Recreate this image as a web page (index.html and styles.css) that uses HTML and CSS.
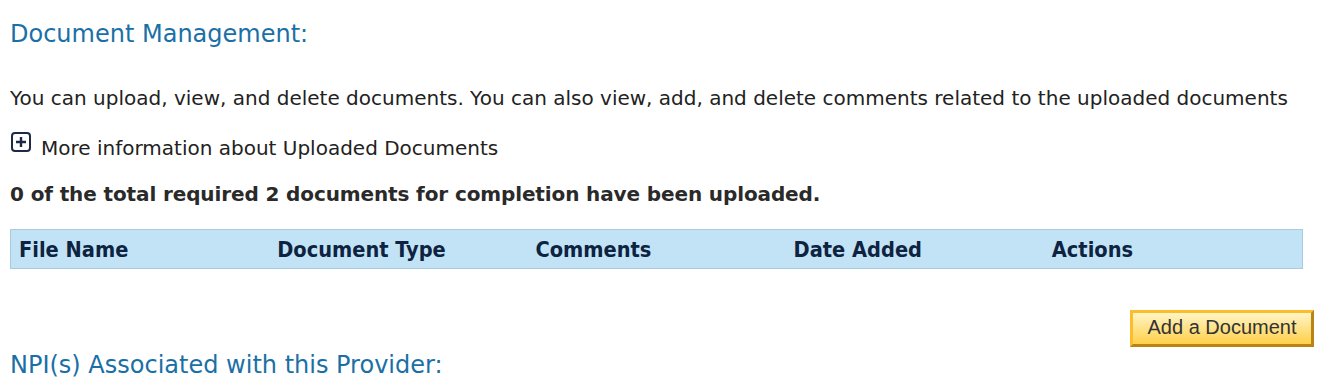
FILE: index.html
```html
<!DOCTYPE html>
<html>
<head>
<meta charset="utf-8">
<link rel="stylesheet" href="styles.css">
</head>
<body>
<div class="page">
  <h2 class="section-title">Document Management:</h2>
  <p class="intro">You can upload, view, and delete documents. You can also view, add, and delete comments related to the uploaded documents</p>
  <div class="more-info">
    <span class="plus-icon"><svg width="20" height="20" viewBox="0 0 20 20"><rect x="1" y="1" width="18" height="18" rx="3" ry="3" fill="#fff" stroke="#1c2b45" stroke-width="2"/><path d="M10 5v10M5 10h10" stroke="#1c2b45" stroke-width="2.4"/></svg></span>
    <span>More information about Uploaded Documents</span>
  </div>
  <p class="status">0 of the total required 2 documents for completion have been uploaded.</p>
  <div class="doc-table">
    <div class="th">File Name</div>
    <div class="th">Document Type</div>
    <div class="th">Comments</div>
    <div class="th">Date Added</div>
    <div class="th">Actions</div>
  </div>
  <div class="actions-row">
    <button class="btn-add">Add a Document</button>
  </div>
  <h2 class="section-title npi">NPI(s) Associated with this Provider:</h2>
</div>
</body>
</html>
```

FILE: styles.css
```css
html, body {
  margin: 0;
  padding: 0;
  background: #fff;
}
.page {
  padding: 0 10px;
  font-family: "DejaVu Sans", Verdana, sans-serif;
  color: #222;
}
.section-title {
  margin: 0;
  padding-top: 20px;
  font-weight: normal;
  font-size: 24px;
  line-height: 28px;
  color: #1a70a6;
}
.intro {
  margin: 38px 0 0;
  font-size: 20px;
  line-height: 24px;
}
.more-info {
  margin-top: 26px;
  display: flex;
  align-items: flex-start;
  gap: 10px;
  font-size: 20px;
  line-height: 24px;
}
.plus-icon {
  display: flex;
  margin-left: 1px;
  margin-top: -4px;
}
.status {
  margin: 22px 0 0;
  font-weight: bold;
  font-size: 20px;
  line-height: 24px;
  letter-spacing: -0.12px;
  color: #2a2a2a;
}
.doc-table {
  margin-top: 23px;
  margin-right: 11px;
  display: grid;
  grid-template-columns: repeat(5, 1fr);
  background: #c2e3f5;
  border: 1px solid #a8cbe0;
  height: 38px;
  align-items: center;
}
.th {
  padding-left: 8px;
  font-family: "DejaVu Sans Condensed", "DejaVu Sans", sans-serif;
  font-stretch: condensed;
  font-weight: bold;
  font-size: 21.6px;
  color: #0d2341;
}
.actions-row {
  display: flex;
  justify-content: flex-end;
  margin-top: 41px;
}
.btn-add {
  font-family: "Liberation Sans", Arial, sans-serif;
  font-size: 20px;
  color: #333;
  width: 184px;
  height: 37px;
  padding: 0 0 2px;
  border: 3px solid;
  border-color: #fcbd2c #b98316 #b98316 #fcbd2c;
  background: linear-gradient(#fff4c6, #ffd049);
  cursor: pointer;
}
.section-title.npi {
  padding-top: 4px;
}
```
